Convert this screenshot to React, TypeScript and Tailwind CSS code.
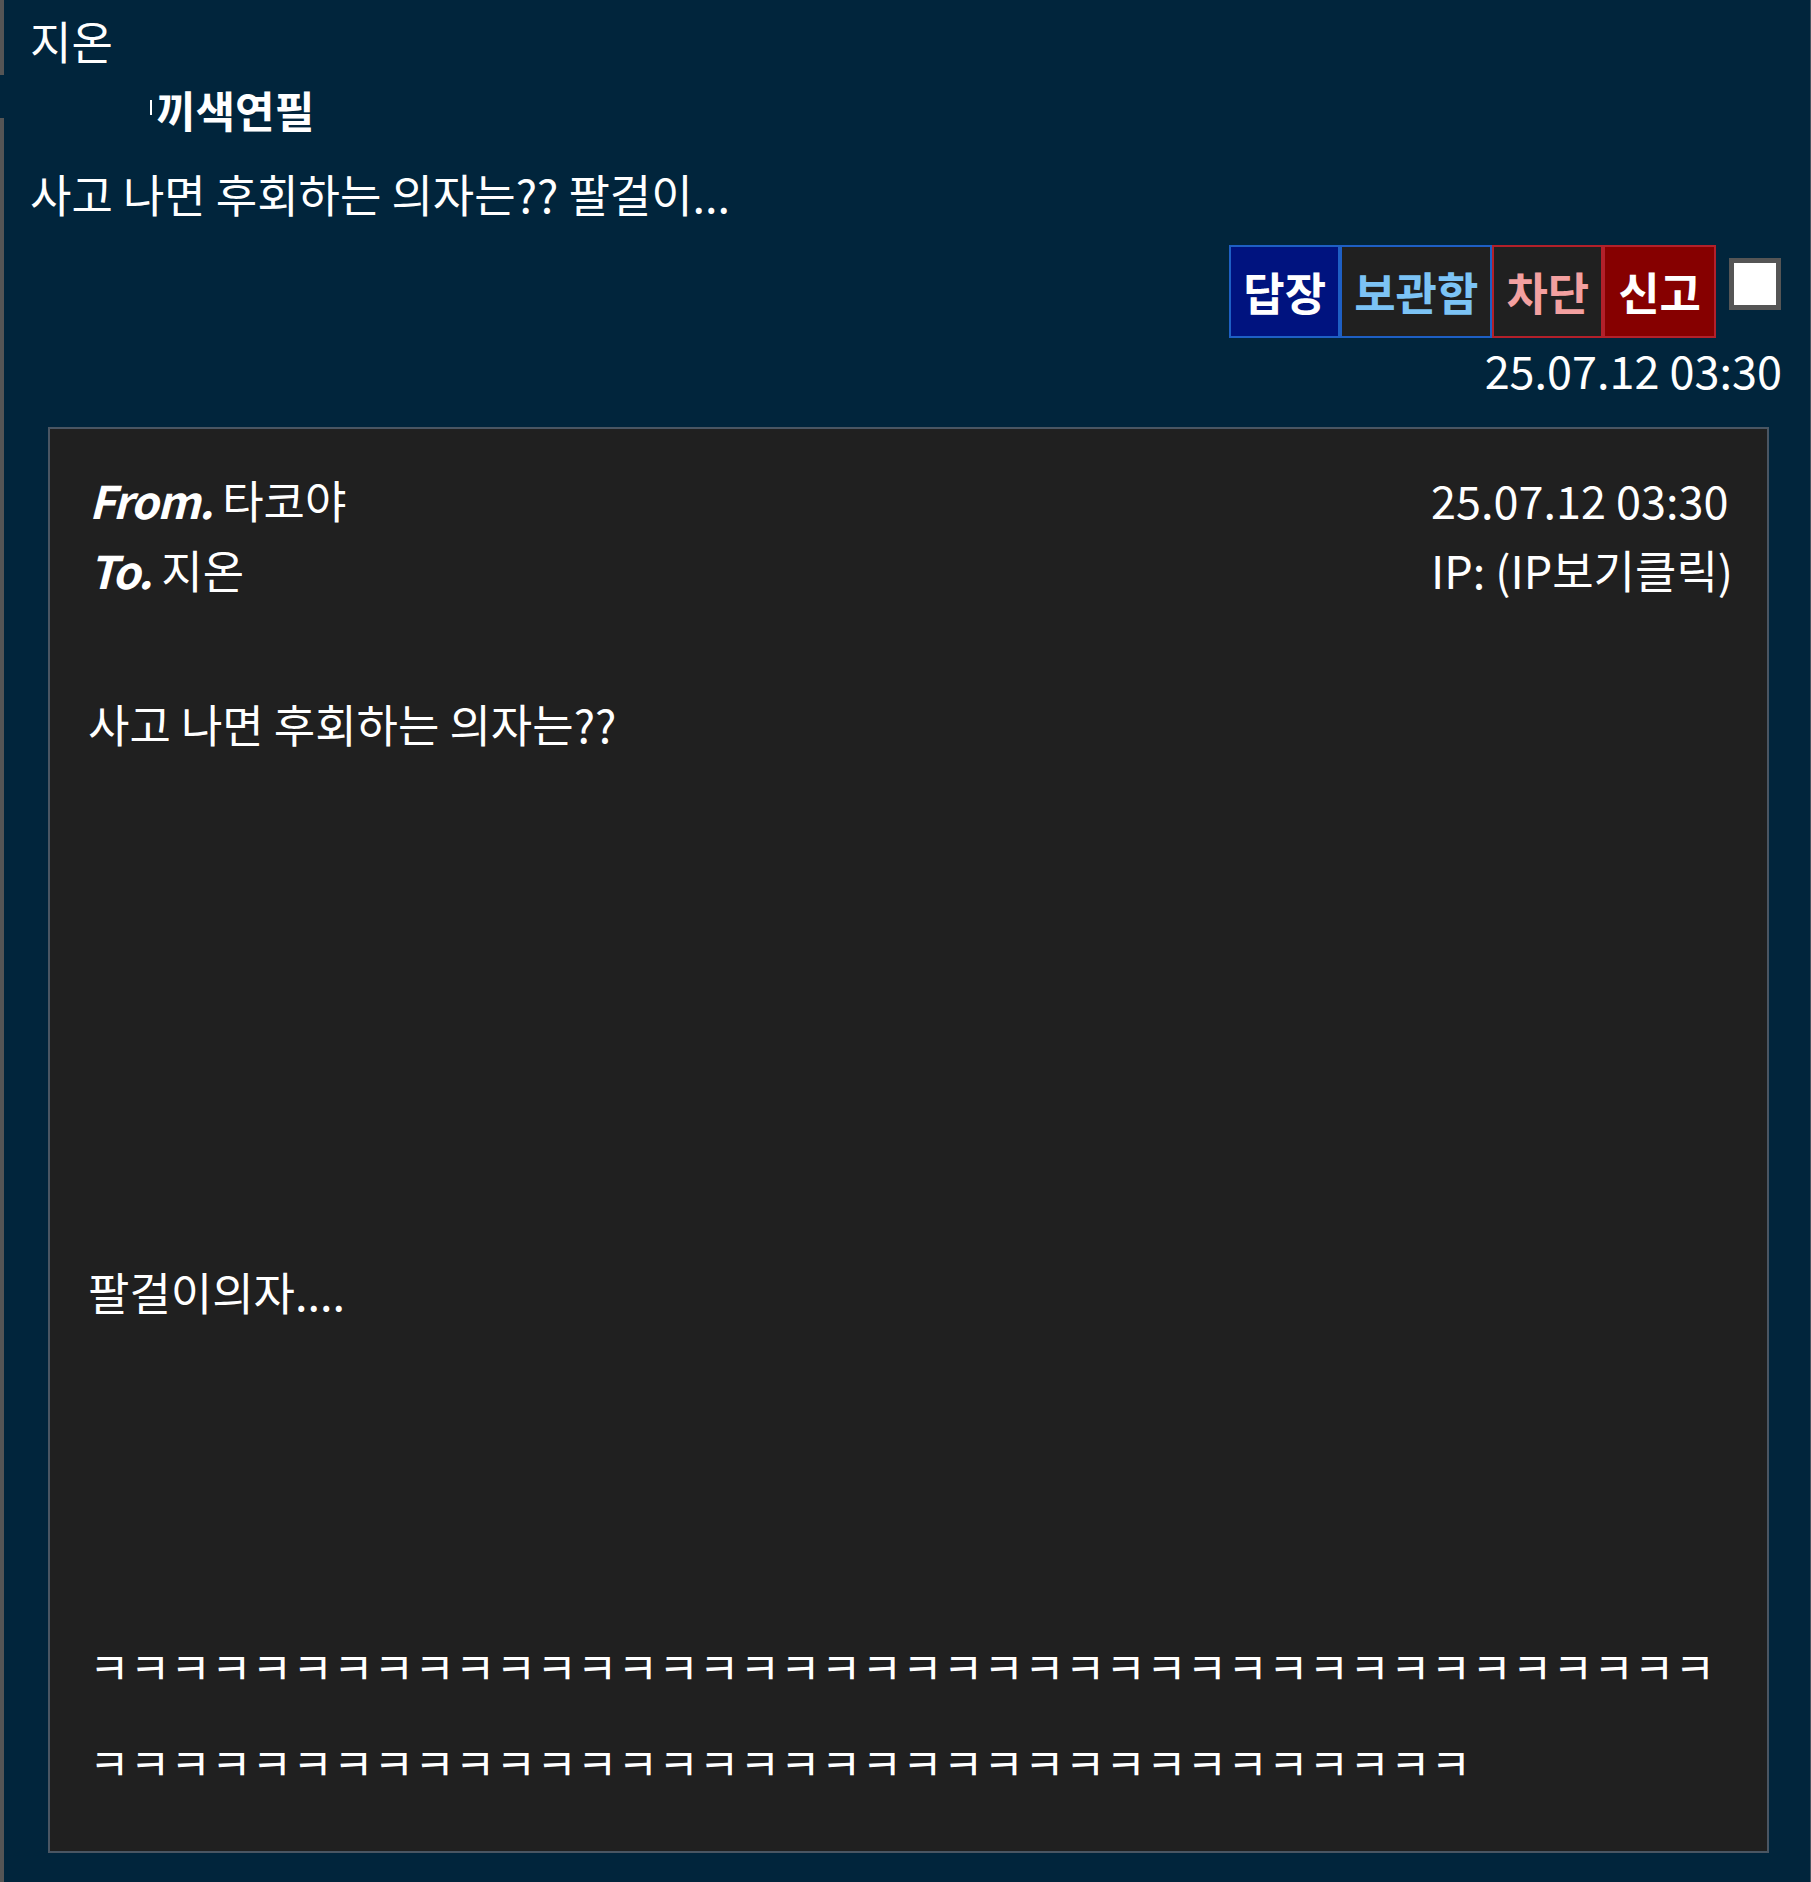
import React from "react";

const font = { fontFamily: '"Noto Sans CJK KR", "Noto Sans", sans-serif' };

export default function App() {
  const k1 = "ㅋ".repeat(40);
  const k2 = "ㅋ".repeat(34);
  return (
    <div
      className="w-[1811px] min-h-[1882px] bg-[#01253c] text-white border-l-[4px] border-l-[#555555] border-r border-r-[#4a5560] text-[45px]"
      style={font}
    >
      {/* sender name */}
      <div className="h-[75px] pl-[26px] pt-[7px] leading-[68px]">지온</div>

      {/* nickname row (covers left bar) */}
      <div className="-ml-[4px] h-[43px] bg-[#01253c] pl-[150px]">
        <div className="flex items-start pt-[13px] leading-[43px] font-bold text-[43px]">
          <span className="inline-block w-[2px] h-[15px] bg-white mt-[12px] mr-[4px]" />
          <span>끼색연필</span>
        </div>
      </div>

      {/* preview text */}
      <div className="pl-[26px] pt-[46px] leading-[60px] h-[127px]">
        사고 나면 후회하는 의자는?? 팔걸이...
      </div>

      {/* actions */}
      <div className="flex justify-end items-start pr-[29px]">
        <div className="flex h-[93px] font-bold">
          <button className="h-full px-[12px] border-2 border-[#1e5fc4] bg-[#00137f] text-white leading-[86px]">
            답장
          </button>
          <button className="h-full px-[12px] border-2 border-[#1e5fc4] bg-[#202020] text-[#7cc3f5] leading-[86px]">
            보관함
          </button>
          <button className="h-full px-[12px] border-2 border-[#b3202a] bg-[#202020] text-[#f3a0a0] leading-[86px]">
            차단
          </button>
          <button className="h-full px-[13px] border-2 border-[#b3202a] bg-[#860000] text-white leading-[86px]">
            신고
          </button>
        </div>
        <div className="ml-[13px] mt-[13px] w-[52px] h-[52px] border-[5px] border-[#555555] bg-white" />
      </div>
      <div className="flex justify-end pr-[28px] mt-[2px] leading-[60px]">25.07.12 03:30</div>

      {/* message card */}
      <div className="ml-[44px] mr-[41px] mt-[27px] mb-[27px] border-2 border-[#4a5663] bg-[#202020] pl-[39px] pr-[34px] pt-[36px] pb-[41px]">
        <div className="flex justify-between leading-[70px]">
          <div>
            <div>
              <span className="font-bold italic tracking-[-1.5px]">From.</span> 타코야
            </div>
            <div>
              <span className="font-bold italic tracking-[-1.5px]">To.</span> 지온
            </div>
          </div>
          <div>
            <div>25.07.12 03:30</div>
            <div>IP: (IP보기클릭)</div>
          </div>
        </div>
        <div className="h-[71px]" />
        <div className="leading-[96px] -ml-[1px]">사고 나면 후회하는 의자는??</div>
        <div className="h-[472px]" />
        <div className="leading-[96px] -ml-[1px]">팔걸이의자....</div>
        <div className="h-[278px]" />
        <div className="leading-[96px] whitespace-nowrap text-[44.2px]">{k1}</div>
        <div className="leading-[96px] whitespace-nowrap text-[44.2px]">{k2}</div>
      </div>
    </div>
  );
}
